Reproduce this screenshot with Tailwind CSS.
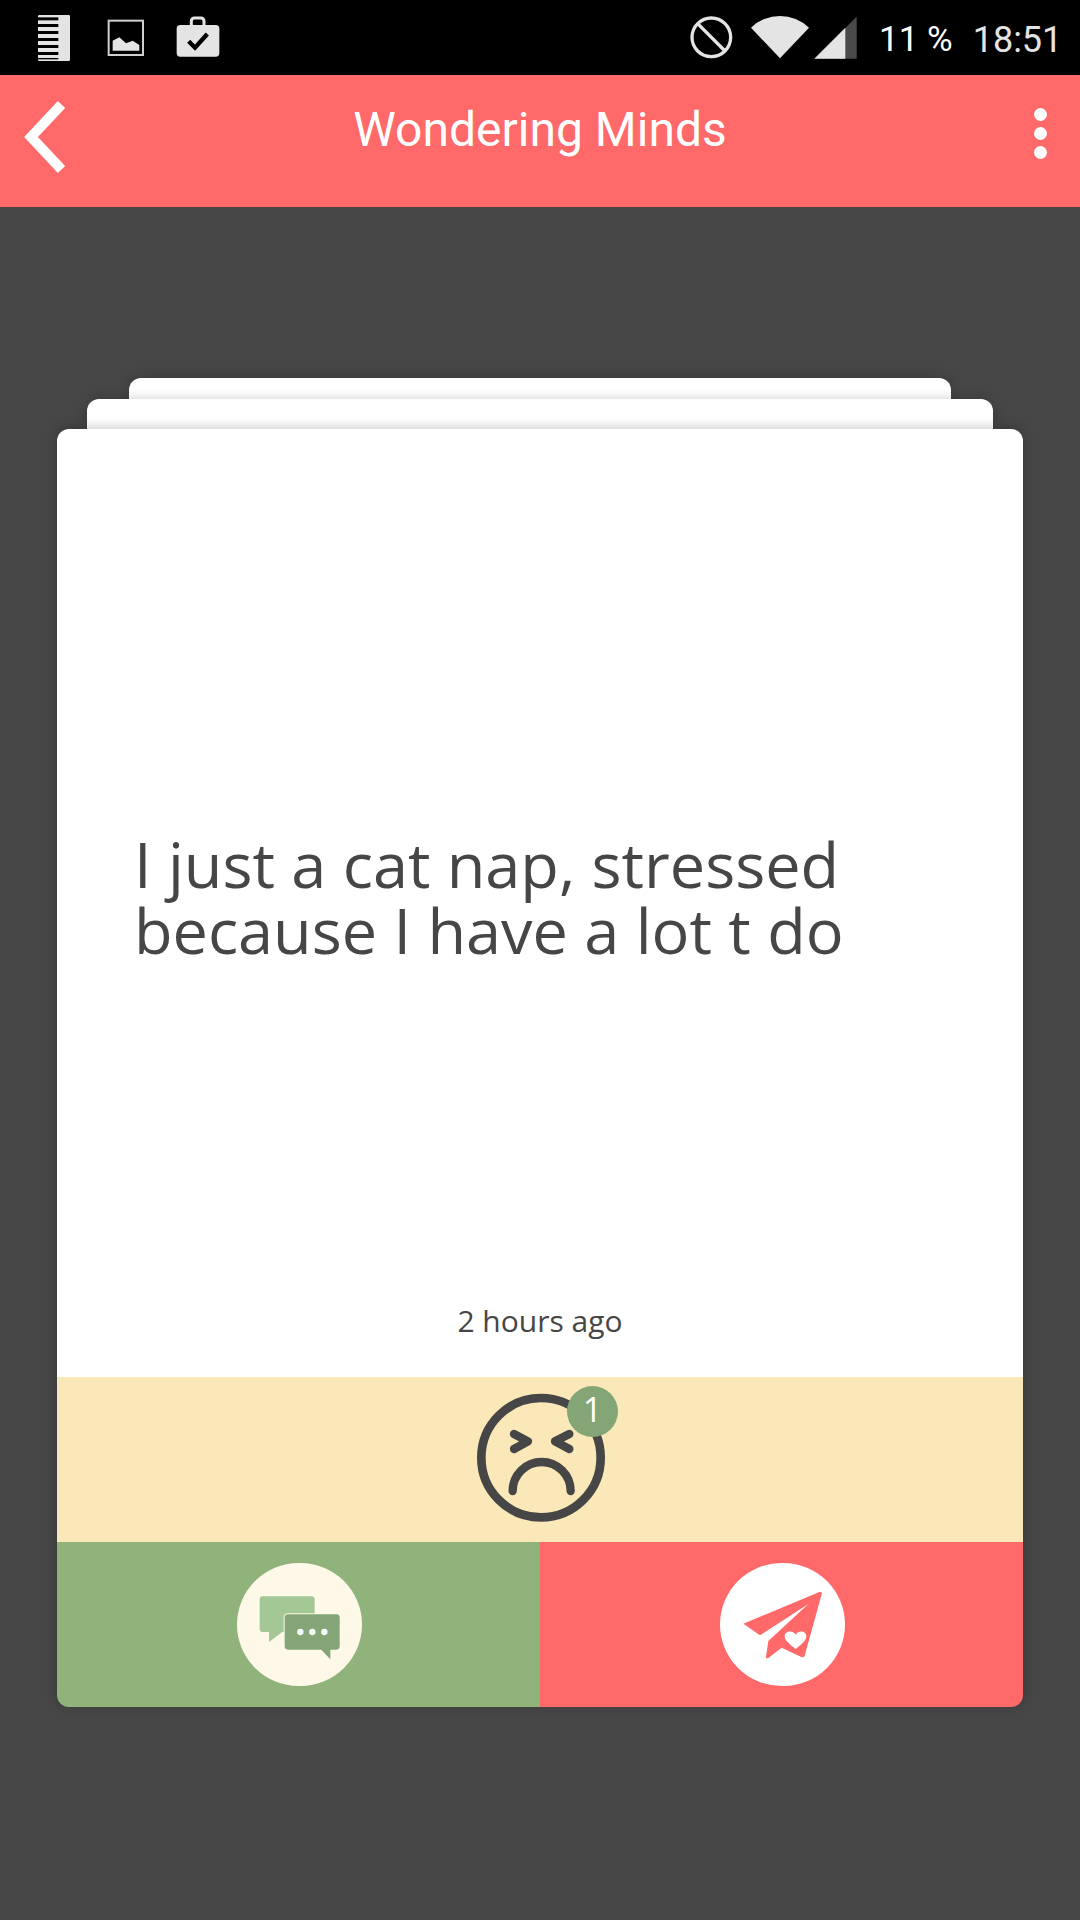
<!DOCTYPE html>
<html lang="en">
  <head>
    <meta charset="UTF-8" />
    <meta name="viewport" content="width=device-width, initial-scale=1.0" />
    <title>Wondering Minds</title>
    <script src="https://cdn.jsdelivr.net/npm/@tailwindcss/browser@4"></script>
  </head>
  <body class="bg-[#464646] min-h-screen font-['Open_Sans',sans-serif]">
    <!-- Status bar -->
    <div class="h-[75px] bg-black flex justify-between items-start text-[#e4e4e4]">
      <svg width="300" height="75" viewBox="0 0 900 225">
        <rect x="114" y="45" width="96" height="138" rx="4" fill="#e4e4e4" />
        <g fill="#000">
          <rect x="114" y="52" width="61" height="9" />
          <rect x="114" y="72" width="61" height="9" />
          <rect x="114" y="93" width="61" height="9" />
          <rect x="114" y="114" width="61" height="9" />
          <rect x="114" y="135" width="61" height="9" />
          <rect x="114" y="156" width="61" height="9" />
          <rect x="114" y="174" width="61" height="4" />
        </g>
        <rect x="326" y="62" width="103" height="103" fill="none" stroke="#cfcfcf" stroke-width="6" />
        <path d="M338 152V122L358 112L378 130L398 122L418 135V152Z" fill="#e4e4e4" />
        <rect x="574" y="54" width="38" height="30" rx="9" fill="none" stroke="#e4e4e4" stroke-width="9" />
        <rect x="530" y="75" width="128" height="95" rx="11" fill="#e4e4e4" />
        <path d="M566 124L585 143L622 102" fill="none" stroke="#000" stroke-width="13" />
      </svg>
      <div class="w-[420px] flex items-start">
        <svg width="215" height="75" viewBox="0 0 645 225">
          <circle cx="154" cy="112" r="58" fill="none" stroke="#e4e4e4" stroke-width="10" />
          <path d="M113 71L195 153" stroke="#e4e4e4" stroke-width="10" />
          <path d="M273 83A125 125 0 0 1 447 83L360 175Z" fill="#e4e4e4" />
          <path d="M463 176L590 50V176Z" fill="#4a4a4a" />
          <path d="M463 176L556 83V176Z" fill="#e4e4e4" />
        </svg>
        <div class="flex gap-[20px] pl-[4px] h-[75px] items-center font-['Roboto',sans-serif] text-[35px] leading-none pt-[4px]">
          <span class="text-white">11 %</span>
          <span class="text-[36px]">18:51</span>
        </div>
      </div>
    </div>

    <!-- Header -->
    <div class="relative h-[132px] bg-[#ff6969] flex items-center justify-center text-white">
      <svg class="absolute left-0 top-0" width="80" height="132" viewBox="0 75 80 132">
        <path d="M61.5 104.5L31 137L61.5 169.5" fill="none" stroke="#fff" stroke-width="10" />
      </svg>
      <h1 class="font-['Roboto',sans-serif] text-[48px] leading-none pb-[22px]">Wondering Minds</h1>
      <div class="absolute right-[33px] top-[33px] flex flex-col gap-[6px]">
        <span class="w-[13px] h-[13px] rounded-full bg-white"></span>
        <span class="w-[13px] h-[13px] rounded-full bg-white"></span>
        <span class="w-[13px] h-[13px] rounded-full bg-white"></span>
      </div>
    </div>

    <!-- Card stack -->
    <div class="pt-[171px] px-[57px]">
      <div class="h-[21px] mx-[72px] bg-white rounded-t-[12px] shadow-[0_0_12px_rgba(0,0,0,0.2)]"></div>
      <div class="relative h-[30px] mx-[30px] bg-white rounded-t-[12px] shadow-[0_0_12px_rgba(0,0,0,0.2)]"></div>
      <div class="relative rounded-[12px] overflow-hidden shadow-[0_-2px_12px_rgba(0,0,0,0.2)]">
        <div class="h-[948px] bg-white flex flex-col text-[#464646]">
          <p class="pt-[402px] pl-[77px] text-[63px] leading-[66px]">I just a cat nap, stressed<br />because I have a lot t do</p>
          <p class="mt-auto pb-[36px] text-center text-[30px] leading-[40px]">2 hours ago</p>
        </div>

        <!-- Reaction -->
        <div class="h-[165px] bg-[#fbe8b8] flex justify-center">
          <div class="relative w-[200px] h-[165px]">
            <svg width="200" height="165" viewBox="0 21 600 495">
              <g fill="none" stroke="#464646" stroke-linecap="round" stroke-linejoin="round">
                <circle cx="303" cy="263" r="179" stroke-width="26" />
                <path d="M222 192L264 214L222 237M388 192L345 214L388 237" stroke-width="25" />
                <path d="M218 363A87 87 0 0 1 392 363" stroke-width="25" />
              </g>
            </svg>
            <span class="absolute left-[127px] top-[9px] w-[51px] h-[51px] rounded-full bg-[#84a676] text-white text-[34px] leading-[46px] text-center">1</span>
          </div>
        </div>

        <!-- Actions -->
        <div class="grid grid-cols-2 h-[165px]">
          <div class="bg-[#90b37c] flex items-center justify-center">
            <div class="w-[125px] h-[123px] rounded-full bg-[#fdf8e8] ml-[2px]">
              <svg width="125" height="123" viewBox="82 68 375 369">
                <path d="M160 168H305Q315 168 315 178V265Q315 275 305 275H218L178 305V275H160Q150 275 150 265V178Q150 168 160 168Z" fill="#a3c795" />
                <path d="M235 222H380Q390 222 390 232V318Q390 328 380 328H362V357L335 328H235Q225 328 225 318V232Q225 222 235 222Z" fill="#84a676" stroke="#fdf8e8" stroke-width="6" paint-order="stroke" />
                <circle cx="272" cy="275" r="9.5" fill="#fff" />
                <circle cx="308" cy="275" r="9.5" fill="#fff" />
                <circle cx="344" cy="275" r="9.5" fill="#fff" />
              </svg>
            </div>
          </div>
          <div class="bg-[#ff6969] flex items-center justify-center">
            <div class="w-[125px] h-[123px] rounded-full bg-white ml-[2px]">
              <svg width="125" height="123" viewBox="60 68 375 369">
                <path d="M130 250L358 155Q367 153 365 162L314 346Q311 353 304 350L245 322L205 353Q198 357 198 349L205 302L325 191L180 285Z" fill="#ff6969" />
                <path d="M287 326C270 312 254 302 254 288C254 272 278 268 287 283C296 268 319 272 319 288C319 302 304 312 287 326Z" fill="#fff" />
              </svg>
            </div>
          </div>
        </div>
      </div>
    </div>
  </body>
</html>
